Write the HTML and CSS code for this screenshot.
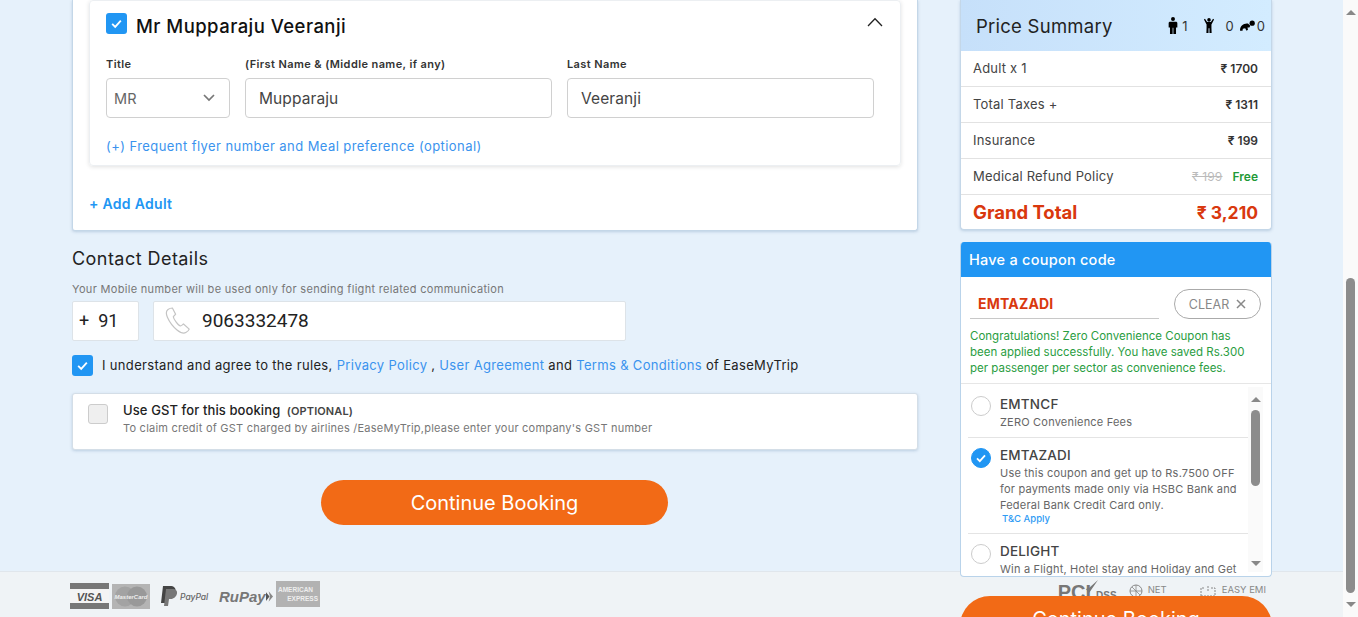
FILE: index.html
```html
<!DOCTYPE html>
<html lang="en">
<head>
    <meta charset="UTF-8">
    <meta name="viewport" content="width=device-width, initial-scale=1.0">
    <title>Flight Booking</title>
    <link rel="stylesheet" href="styles.css">
</head>
<body>
<div class="page">
    <div class="content">
        <main class="left-col">
            <section class="adult-card">
                <div class="traveller">
                    <div class="traveller-head">
                        <span class="check"><svg viewBox="0 0 12 12" width="13" height="13"><path d="M2 6.3l2.800 2.800L10 3.400" fill="none" stroke="#fff" stroke-width="1.700"/></svg></span>
                        <h2>Mr Mupparaju Veeranji</h2>
                        <svg class="chevron" viewBox="0 0 16 10" width="16" height="10"><path d="M1 9l7-7.200L15 9" fill="none" stroke="#222" stroke-width="1.300"/></svg>
                    </div>
                    <div class="name-row">
                        <div class="field field-title">
                            <label>Title</label>
                            <div class="box box-select">MR
                                <svg viewBox="0 0 12 8" width="12" height="8"><path d="M1 1l5 5 5-5" fill="none" stroke="#777" stroke-width="1.700"/></svg>
                            </div>
                        </div>
                        <div class="field field-name">
                            <label>(First Name &amp; (Middle name, if any)</label>
                            <div class="box">Mupparaju</div>
                        </div>
                        <div class="field field-name">
                            <label>Last Name</label>
                            <div class="box">Veeranji</div>
                        </div>
                    </div>
                    <a class="flyer-link">(+) Frequent flyer number and Meal preference (optional)</a>
                </div>
                <a class="add-adult">+ Add Adult</a>
            </section>

            <h3 class="contact-title">Contact Details</h3>
            <p class="contact-note">Your Mobile number will be used only for sending flight related communication</p>
            <div class="phone-row">
                <div class="phone-code">+&nbsp; 91</div>
                <div class="phone-num">
                    <svg viewBox="0 0 26 28" width="26" height="28"><path d="M3 2.500c-2.300 1.700-2 4.500-.6 7.800 2 4.600 5.600 9.400 9.600 12.700 3 2.400 6.400 4 8.800 2.600 1.400-.8 3-2.400 3.400-3.500l-5.700-5c-.9.500-2 1.600-3 1.900-2.200-.5-6.900-6.800-7.200-9.300.6-1 1.700-1.700 2.300-2.500L7.400 1C6.200 1 4.200 1.600 3 2.500z" fill="none" stroke="#c4c4c4" stroke-width="1.200"/></svg>
                    <span>9063332478</span>
                </div>
            </div>
            <div class="agree-row">
                <span class="check"><svg viewBox="0 0 12 12" width="13" height="13"><path d="M2 6.300l2.800 2.800L10 3.400" fill="none" stroke="#fff" stroke-width="1.700"/></svg></span>
                <p>I understand and agree to the rules, <a>Privacy Policy</a> , <a>User Agreement</a> and <a>Terms &amp; Conditions</a> of EaseMyTrip</p>
            </div>
            <section class="gst-card">
                <span class="gst-check"></span>
                <div class="gst-text">
                    <div class="gst-title">Use GST for this booking <b>(OPTIONAL)</b></div>
                    <div class="gst-sub">To claim credit of GST charged by airlines /EaseMyTrip,please enter your company's GST number</div>
                </div>
            </section>
            <button class="continue continue-main">Continue Booking</button>
        </main>

        <aside class="sidebar">
            <section class="price-card">
                <div class="price-head">
                    <span class="price-title">Price Summary</span>
                    <span class="pax">
                        <svg viewBox="0 0 10 18" width="10" height="17"><circle cx="5" cy="2.200" r="2.100"/><path d="M2 5h6c1 0 1.600.6 1.600 1.500V11H8.200v7H5.400v-6.500h-.8V18H1.800v-7H.4V6.500C.4 5.600 1 5 2 5z"/></svg>
                        <i class="n1">1</i>
                        <svg viewBox="0 0 12 16" width="12" height="15"><circle cx="6" cy="2" r="1.900"/><path d="M.6 1.500l1.100-.6L4 4.200h4L10.300.9l1.100.6L8.600 7v3.500l.2 5.500H6.500V11h-1v5H3.200l.2-5.500V7z"/></svg>
                        <i class="n2">0</i>
                        <svg viewBox="0 0 16 11" width="15" height="11"><circle cx="13" cy="3" r="2.800"/><path d="M0 11c0-2.500.6-4.400 2-5.600C3.500 4 6.500 2.800 8.500 3.400l2.500 2.400-1 1.700H8l.5 2.500-1.500 1-1.500-2.500-2.500.5-.3 2z"/></svg>
                        <i class="n3">0</i>
                    </span>
                </div>
                <div class="price-row"><span>Adult x 1</span><b>₹ 1700</b></div>
                <div class="price-row"><span>Total Taxes +</span><b>₹ 1311</b></div>
                <div class="price-row"><span>Insurance</span><b>₹ 199</b></div>
                <div class="price-row"><span>Medical Refund Policy</span><span class="free-wrap"><s>₹ 199</s><b class="free">Free</b></span></div>
                <div class="price-total"><span>Grand Total</span><span class="total-sum">₹ 3,210</span></div>
            </section>

            <section class="coupon-card">
                <div class="coupon-head">Have a coupon code</div>
                <div class="coupon-input-row">
                    <div class="coupon-input">EMTAZADI</div>
                    <div class="clear-btn">CLEAR <svg viewBox="0 0 10 10" width="10" height="10"><path d="M1 1l8 8M9 1l-8 8" stroke="#888" stroke-width="1.500"/></svg></div>
                </div>
                <p class="coupon-msg">Congratulations! Zero Convenience Coupon has<br>been applied successfully. You have saved Rs.300<br>per passenger per sector as convenience fees.</p>
                <div class="coupon-scroll">
                    <div class="coupon-list">
                        <div class="coupon-item">
                            <span class="radio"></span>
                            <div>
                                <div class="coupon-name">EMTNCF</div>
                                <div class="coupon-desc">ZERO Convenience Fees</div>
                            </div>
                        </div>
                        <div class="coupon-item">
                            <span class="radio radio-on"><svg viewBox="0 0 12 12" width="12" height="12"><path d="M2 6.300l2.800 2.800L10 3.400" fill="none" stroke="#fff" stroke-width="1.800"/></svg></span>
                            <div>
                                <div class="coupon-name">EMTAZADI</div>
                                <div class="coupon-desc">Use this coupon and get up to Rs.7500 OFF<br>for payments made only via HSBC Bank and<br>Federal Bank Credit Card only.</div>
                                <a class="tc">T&amp;C Apply</a>
                            </div>
                        </div>
                        <div class="coupon-item">
                            <span class="radio"></span>
                            <div>
                                <div class="coupon-name">DELIGHT</div>
                                <div class="coupon-desc">Win a Flight, Hotel stay and Holiday and Get</div>
                            </div>
                        </div>
                    </div>
                    <div class="mini-bar">
                        <span class="arrow-up"></span>
                        <span class="mini-thumb"></span>
                        <span class="arrow-down"></span>
                    </div>
                </div>
            </section>
            <button class="continue continue-side">Continue Booking</button>
        </aside>

        <footer class="footer">
            <div class="pay-logos">
                <svg class="logo" viewBox="0 0 39 26" width="39" height="26">
                    <rect width="39" height="26" fill="#777"/><rect y="6" width="39" height="14" fill="#f4f4f4"/>
                    <text x="19.500" y="17.500" text-anchor="middle" class="logo-visa">VISA</text>
                </svg>
                <svg class="logo" viewBox="0 0 38 25" width="38" height="25">
                    <rect width="38" height="25" fill="#b4b4b4"/><circle cx="13" cy="12.500" r="10" fill="#a3a3a3"/><circle cx="25" cy="12.500" r="10" fill="#999"/>
                    <text x="19" y="15" text-anchor="middle" class="logo-mc">MasterCard</text>
                </svg>
                <svg class="logo logo-pp" viewBox="0 0 52 22" width="52" height="22">
                    <path d="M3 1h7c4 0 6 2 5.500 5-.6 4-3.500 6-7 6H6l-1 6H1z" fill="#444"/><path d="M6 4h6.500c3 0 5 1.500 4.500 4.500S13.500 14 11 14H9l-1 7H4z" fill="#777"/>
                    <text x="20" y="15" class="logo-paypal">PayPal</text>
                </svg>
                <span class="logo-rupay">RuPay<svg viewBox="0 0 8 12" width="7" height="11"><path d="M0 1l4 5-4 5z" fill="#555"/><path d="M3 0l5 6-5 6 1.500-6z" fill="#888"/></svg></span>
                <svg class="logo logo-am" viewBox="0 0 44 26" width="44" height="26">
                    <rect width="44" height="26" fill="#b2b2b2"/>
                    <text x="2" y="11" class="logo-amex">AMERICAN</text>
                    <text x="42" y="20" text-anchor="end" class="logo-amex">EXPRESS</text>
                </svg>
            </div>
            <div class="secure-logos">
                <span class="pci"><b>PCI</b><svg class="pci-tick" viewBox="0 0 14 14" width="14" height="14"><path d="M1 9l3 4L13 0 4 8z" fill="#777"/></svg><em>DSS</em></span>
                <span class="secure-item secure-net">
                    <svg viewBox="0 0 14 14" width="14" height="14"><circle cx="7" cy="7" r="6" fill="none" stroke="#888"/><path d="M1 7h12M7 1v12M3 3l8 8" stroke="#888" stroke-width=".8"/></svg>NET</span>
                <span class="secure-item">
                    <svg viewBox="0 0 18 14" width="18" height="14"><path d="M2 12V4h4M12 4h4v8M2 12h14M9 2v5" fill="none" stroke="#888" stroke-dasharray="2 1"/></svg>EASY EMI</span>
            </div>
        </footer>
    </div>
    <div class="page-bar">
        <span class="arrow-up"></span>
        <span class="page-thumb"></span>
        <span class="arrow-down"></span>
    </div>
</div>
</body>
</html>
```

FILE: styles.css
```css
* {
    box-sizing: border-box;
}
body {
    margin: 0;
    font-family: Inter, "Noto Sans", Arial, sans-serif;
    color: #222;
    background: #e6f1fb;
}
p, h2, h3 {
    margin: 0;
    font-weight: 400;
}
a {
    color: #3a93ee;
}
.page {
    display: flex;
    height: 617px;
    overflow: hidden;
}
.content {
    flex: 1;
    display: grid;
    grid-template-columns: 72px 846px 43px 311px 1fr;
    grid-template-rows: 571px 46px;
    min-width: 0;
}

/* left column */
.left-col {
    grid-column: 2;
    grid-row: 1;
}
.adult-card {
    height: 231px;
    background: #fff;
    border: 1px solid #c4d7e8;
    border-top: 0;
    border-radius: 0 0 3px 3px;
    box-shadow: 0 1px 3px rgba(90, 130, 170, .3);
    padding: 0 16px;
}
.traveller {
    height: 166px;
    border: 1px solid #eceff2;
    border-radius: 4px;
    box-shadow: 0 1px 4px rgba(0, 0, 0, .12);
    padding: 12px 26px 0 16px;
}
.traveller-head {
    display: flex;
    align-items: flex-start;
    height: 26px;
}
.traveller-head h2 {
    margin-left: 9px;
    font-size: 18.5px;
    line-height: 26px;
    letter-spacing: .45px;
    font-weight: 500;
    color: #111;
}
.chevron {
    margin-left: auto;
    margin-right: -9px;
    margin-top: 4px;
}
.check {
    width: 21px;
    height: 21px;
    flex: none;
    display: flex;
    align-items: center;
    justify-content: center;
    background: #2196f3;
    border-radius: 3px;
}
.name-row {
    display: flex;
    gap: 15px;
    margin-top: 17px;
}
.field label {
    display: block;
    height: 22px;
    font-size: 11px;
    line-height: 16px;
    letter-spacing: .4px;
    font-weight: 600;
    color: #333;
}
.field-title {
    width: 124px;
}
.field-name {
    width: 307px;
}
.box {
    height: 40px;
    border: 1px solid #d0d0d0;
    border-radius: 4px;
    display: flex;
    align-items: center;
    padding-left: 13px;
    font-size: 15.5px;
    letter-spacing: .1px;
    color: #444;
}
.box-select {
    justify-content: space-between;
    padding: 0 14px 0 7px;
    font-size: 14.5px;
    color: #666;
}
.flyer-link {
    display: block;
    margin-top: 19px;
    font-size: 13px;
    line-height: 18px;
    letter-spacing: .43px;
}
.add-adult {
    display: block;
    margin-top: 29px;
    font-size: 14px;
    line-height: 18px;
    letter-spacing: .3px;
    font-weight: 600;
    color: #2196f3;
}
.contact-title {
    margin-top: 17px;
    font-size: 18px;
    line-height: 22px;
    letter-spacing: .45px;
    color: #222;
}
.contact-note {
    margin-top: 11px;
    font-size: 11px;
    line-height: 16px;
    letter-spacing: .31px;
    color: #777;
}
.phone-row {
    display: flex;
    gap: 14px;
    margin-top: 4px;
    font-family: Roboto, Arial, sans-serif;
    font-size: 18px;
    color: #222;
}
.phone-code,
.phone-num {
    height: 40px;
    background: #fff;
    border: 1px solid #dde3e8;
    border-radius: 2px;
    display: flex;
    align-items: center;
    padding-bottom: 2px;
}
.phone-code {
    width: 67px;
    padding-left: 6px;
}
.phone-num {
    width: 473px;
    padding-left: 11px;
    gap: 11px;
    font-size: 19px;
}
.phone-num svg {
    margin-top: 2px;
}
.agree-row {
    display: flex;
    align-items: center;
    gap: 9px;
    margin-top: 14px;
    font-size: 13px;
    letter-spacing: .33px;
    color: #222;
}
.agree-row p {
    margin-top: -2px;
}
.gst-card {
    display: flex;
    gap: 15px;
    height: 57px;
    margin-top: 17px;
    padding: 10px 15px;
    background: #fff;
    border: 1px solid #d4dee7;
    border-radius: 3px;
    box-shadow: 0 1px 3px rgba(90, 130, 170, .3);
}
.gst-check {
    width: 20px;
    height: 20px;
    background: #efefef;
    border: 1px solid #ccc;
    border-radius: 3px;
}
.gst-text {
    margin-top: -2px;
}
.gst-title {
    font-size: 13px;
    line-height: 16px;
    letter-spacing: .1px;
    font-weight: 500;
}
.gst-title b {
    margin-left: 3px;
    font-size: 11px;
    letter-spacing: .1px;
    font-weight: 600;
    color: #444;
}
.gst-sub {
    margin-top: 1px;
    font-size: 11px;
    line-height: 16px;
    letter-spacing: .23px;
    color: #777;
}
.continue {
    display: block;
    border: 0;
    background: #f26a16;
    color: #fff;
    font-family: inherit;
    font-size: 20px;
}
.continue-main {
    width: 347px;
    height: 45px;
    margin: 30px 0 0 249px;
    border-radius: 23px;
}

/* right column, runs over the footer */
.sidebar {
    grid-column: 4;
    grid-row: 1 / 3;
    z-index: 1;
    min-width: 0;
}
.price-card {
    width: 312px;
    height: 230px;
    margin-left: -1px;
    background: #fff;
    border: 1px solid #c4d7e8;
    border-top: 0;
    border-radius: 0 0 4px 4px;
    box-shadow: 0 1px 3px rgba(90, 130, 170, .3);
}
.price-head {
    height: 51px;
    display: flex;
    align-items: center;
    justify-content: space-between;
    padding: 0 6px 0 15px;
    background: linear-gradient(90deg, #c6e0fa, #d3ecff);
}
.price-title {
    font-size: 18.5px;
    letter-spacing: .25px;
    color: #222;
}
.pax {
    display: flex;
    align-items: center;
    font-size: 13px;
    color: #333;
}
.pax i {
    font-style: normal;
}
.pax .n1 {
    margin: 0 15px 0 4px;
}
.pax .n2 {
    margin: 0 6px 0 11px;
}
.pax .n3 {
    margin-left: 2px;
}
.price-row {
    height: 36px;
    display: flex;
    align-items: center;
    justify-content: space-between;
    padding: 0 13px 1px 12px;
    border-bottom: 1px solid #e2e2e2;
    font-size: 13px;
    letter-spacing: .2px;
    color: #444;
}
.price-row b {
    font-size: 12px;
    letter-spacing: 0;
    font-weight: 600;
    color: #333;
}
.free-wrap {
    display: flex;
    align-items: center;
    gap: 10px;
}
.free-wrap s {
    font-size: 12px;
    color: #bbb;
}
.price-row .free {
    color: #1f9a37;
}
.price-total {
    height: 35px;
    display: flex;
    align-items: center;
    justify-content: space-between;
    padding: 0 13px 1px 12px;
    font-size: 18.5px;
    font-weight: 700;
    color: #d9380e;
}
.total-sum {
    font-size: 17.5px;
}
.coupon-card {
    width: 312px;
    height: 335px;
    margin: 12px 0 0 -1px;
    background: #fff;
    border: 1px solid #b9d3ea;
    border-top: 0;
    border-radius: 4px;
    overflow: hidden;
}
.coupon-head {
    height: 35px;
    display: flex;
    align-items: center;
    padding-left: 8px;
    background: #2196f3;
    color: #fff;
    font-size: 14.5px;
    letter-spacing: .25px;
    font-weight: 500;
}
.coupon-input-row {
    display: flex;
    align-items: flex-end;
    justify-content: space-between;
    height: 42px;
    padding: 0 10px 0 9px;
}
.coupon-input {
    width: 189px;
    height: 30px;
    padding: 6px 0 0 8px;
    border-bottom: 1px solid #c8c8c8;
    font-size: 14px;
    letter-spacing: .2px;
    font-weight: 700;
    color: #d9380e;
}
.clear-btn {
    width: 87px;
    height: 30px;
    display: flex;
    align-items: center;
    justify-content: center;
    gap: 7px;
    border: 1px solid #aaa;
    border-radius: 15px;
    font-size: 12.5px;
    color: #888;
}
.coupon-msg {
    height: 56px;
    margin-top: 9px;
    padding-left: 9px;
    border-bottom: 1px solid #e6e6e6;
    font-size: 11.5px;
    line-height: 16px;
    white-space: nowrap;
    color: #2a9d3f;
}
.coupon-scroll {
    display: flex;
    height: 193px;
    overflow: hidden;
}
.coupon-list {
    width: 280px;
    margin-left: 7px;
    flex: none;
}
.coupon-item {
    display: flex;
    gap: 9px;
    padding: 8px 0 6px 3px;
    border-bottom: 1px solid #e4e4e4;
}
.coupon-item:first-child {
    height: 54px;
    padding-top: 11px;
}
.coupon-item:first-child .radio {
    margin-top: 1px;
}
.coupon-item:nth-child(2) {
    height: 96px;
}
.coupon-item:last-child {
    border: 0;
}
.radio {
    width: 20px;
    height: 20px;
    flex: none;
    display: flex;
    align-items: center;
    justify-content: center;
    border: 1px solid #ccc;
    border-radius: 50%;
    margin-top: 2px;
}
.radio-on {
    background: #2196f3;
    border-color: #2196f3;
}
.coupon-name {
    font-size: 13.5px;
    line-height: 19px;
    letter-spacing: .2px;
    font-weight: 500;
    color: #444;
}
.coupon-desc {
    font-size: 11px;
    line-height: 16px;
    letter-spacing: .2px;
    white-space: nowrap;
    color: #666;
}
.tc {
    display: block;
    margin-left: 2px;
    font-size: 9.5px;
    line-height: 12px;
    font-weight: 500;
    color: #2f9bf4;
}
.mini-bar {
    width: 15px;
    flex: none;
    margin-top: 3px;
    display: flex;
    flex-direction: column;
    align-items: center;
    padding-top: 10px;
    height: 185px;
    background: #fafafa;
}
.mini-thumb {
    width: 9px;
    height: 76px;
    margin-top: 8px;
    background: #8c8c8c;
    border-radius: 5px;
}
.arrow-up,
.arrow-down {
    width: 0;
    height: 0;
    border-left: 5px solid transparent;
    border-right: 5px solid transparent;
}
.arrow-up {
    border-bottom: 5px solid #888;
}
.arrow-down {
    margin-top: auto;
    margin-bottom: 6px;
    border-top: 5px solid #888;
}
.page-bar .arrow-down {
    margin-bottom: 10px;
}
.continue-side {
    width: 312px;
    height: 60px;
    margin: 19px 0 0 -1px;
    border-radius: 30px 30px 0 0;
    padding-bottom: 20px;
    padding-top: 3px;
    line-height: 40px;
}

/* footer */
.footer {
    grid-column: 1 / -1;
    grid-row: 2;
    display: flex;
    justify-content: space-between;
    align-items: flex-start;
    padding: 10px 77px 0 70px;
    background: #eff3f6;
    border-top: 1px solid #e0e6ec;
}
.pay-logos {
    display: flex;
    align-items: center;
    gap: 3px;
    height: 28px;
}
.logo-visa {
    font: italic 700 11px "Liberation Sans", Arial, sans-serif;
    fill: #555;
}
.logo-mc {
    font: italic 700 6px "Liberation Sans", Arial, sans-serif;
    fill: #eee;
}
.logo-pp {
    margin-left: 7px;
}
.logo-paypal {
    font: italic 500 8.5px Inter, Arial, sans-serif;
    fill: #666;
}
.logo-rupay {
    display: flex;
    align-items: center;
    margin-left: 4px;
    font: italic 700 15px "Liberation Sans", Arial, sans-serif;
    color: #777;
}
.logo-am {
    margin-top: -4px;
}
.logo-amex {
    font: 700 6.5px "Liberation Sans", Arial, sans-serif;
    fill: #eee;
}
.secure-logos {
    display: flex;
    font-size: 9.5px;
    color: #888;
}
.pci {
    display: flex;
    align-items: flex-start;
    width: 57px;
    margin: -1px 14px 0 0;
    font-family: "Liberation Sans", Arial, sans-serif;
    color: #777;
}
.pci b {
    font-size: 20px;
    line-height: 22px;
    font-weight: 700;
}
.pci-tick {
    margin: -1px 0 0 -6px;
    flex: none;
}
.pci em {
    margin: 9px 0 0 -3px;
    font-size: 10px;
    line-height: 12px;
    font-style: normal;
    font-weight: 700;
}
.secure-item {
    display: flex;
    align-items: flex-start;
    gap: 5px;
    margin-top: 2px;
}
.secure-net {
    margin-right: 32px;
}

/* browser scrollbar */
.page-bar {
    width: 15px;
    flex: none;
    display: flex;
    flex-direction: column;
    align-items: center;
    padding-top: 10px;
    background: #fafafa;
}
.page-thumb {
    width: 9px;
    height: 315px;
    margin-top: 263px;
    background: #8c8c8c;
    border-radius: 5px;
}
```
